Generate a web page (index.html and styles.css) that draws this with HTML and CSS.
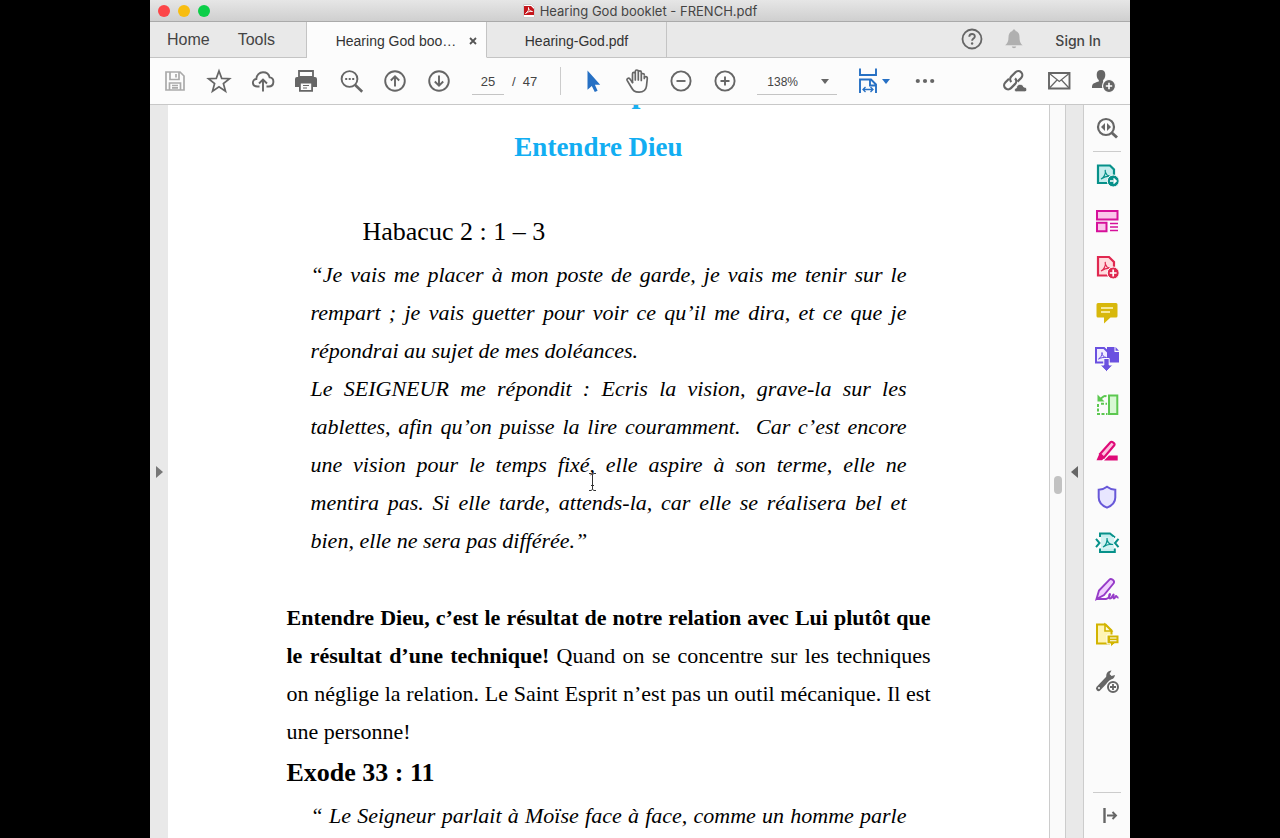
FILE: index.html
```html
<!DOCTYPE html>
<html lang="fr">
<head>
<meta charset="utf-8">
<title>Hearing God booklet - FRENCH.pdf</title>
<link rel="stylesheet" href="styles.css">
</head>
<body>
<div class="window">
  <header class="titlebar">
    <div class="lights">
      <button class="light light-red" aria-label="Close"></button>
      <button class="light light-yellow" aria-label="Minimize"></button>
      <button class="light light-green" aria-label="Zoom"></button>
    </div>
    <div class="window-title">
      <svg class="file-icon" width="12" height="14" viewBox="0 0 12 14"><path d="M.5.5h8l3 3v10H.5z" fill="#fff" stroke="#ccc"/><path d="M1 2h7l3 3v6H1z" fill="#c4161c"/><path d="M2.500 9.500C5 8 6 5.500 5.500 3.500c-.5 2 2 4 4 4-2-.4-5 .2-7 2z" fill="none" stroke="#fff" stroke-width=".9"/></svg>
      <span>Hearing God booklet - FRENCH.pdf</span>
    </div>
  </header>

  <nav class="tabs">
    <div class="views">
      <button class="view">Home</button>
      <button class="view">Tools</button>
    </div>
    <div class="tab tab-active">
      <button class="tab-name">Hearing God boo…</button>
      <button class="tab-close" aria-label="Close tab"><svg width="8" height="8" viewBox="0 0 8 8"><path d="M1 1l6 6M7 1L1 7" stroke="#555" stroke-width="1.800"/></svg></button>
    </div>
    <div class="tab"><button class="tab-name">Hearing-God.pdf</button></div>
    <div class="account">
      <button class="icon-button help" aria-label="Help"><svg class="icon" viewBox="0 0 28 28"><circle cx="14" cy="14" r="9.500" fill="none" stroke="#666" stroke-width="1.800"/><path d="M11.300 11.800c0-3.700 5.500-3.600 5.500-.4 0 2.200-2.700 2.200-2.700 4.400" fill="none" stroke="#666" stroke-width="1.900"/><circle cx="14.100" cy="18.500" r="1.200" fill="#666"/></svg></button>
      <button class="icon-button bell" aria-label="Notifications"><svg class="icon" viewBox="0 0 28 28"><path d="M14 4.500c1 0 1.500.6 1.500 1.400 2.700.8 4 3 4 6 0 4.500 1 6.600 3.300 8.300H5.200C7.500 18.500 8.500 16.400 8.500 12c0-3 1.300-5.300 4-6.100 0-.8.500-1.400 1.500-1.400zM11.800 21.500h4.400c-.3 2.200-4.100 2.200-4.400 0z" fill="#b0b0b0"/></svg></button>
      <button class="sign-in">Sign In</button>
    </div>
  </nav>

  <div class="toolbar">
    <button class="icon-button" aria-label="Save"><svg class="icon" viewBox="0 0 28 28" fill="none" stroke="#aaa" stroke-width="1.700"><path d="M5 5h14l4 4v14H5zM9 5v7.500h9V5M8.500 23v-7h11v7M15 7v3.500M11 18.500h6M11 20.800h6"/></svg></button>
    <button class="icon-button" aria-label="Star"><svg class="icon" viewBox="0 0 28 28"><path d="M14 4l2.700 7.400 7.800.3-6.100 4.900 2.100 7.600L14 19.800l-6.500 4.400 2.100-7.600-6.100-4.900 7.800-.3z" fill="none" stroke="#666" stroke-width="1.700"/></svg></button>
    <button class="icon-button" aria-label="Upload"><svg class="icon" viewBox="0 0 28 28" fill="none" stroke="#666" stroke-width="1.900"><path d="M10.500 19.500H8.200c-5.800 0-5.400-7.300-.9-7.500.1-4 3.200-6.800 6.700-6.800 3.600 0 6 2.300 6.600 5.200 5.300.5 5 9.100-.8 9.100h-2.300M14 24.500V13M10 16.500l4-4 4 4"/></svg></button>
    <button class="icon-button" aria-label="Print"><svg class="icon" viewBox="0 0 28 28"><path d="M6 4h14v6H6z" fill="#fcfcfc" stroke="#666" stroke-width="1.800"/><path d="M4 10h18q2 0 2 2v8h-4v-4H6v4H2v-8q0-2 2-2z" fill="#666"/><path d="M6.900 15.500h12.200v8.300H6.900z" fill="#fcfcfc" stroke="#666" stroke-width="1.800"/><path d="M10 18.500h6M10 21h4" stroke="#666" stroke-width="1.200"/></svg></button>
    <button class="icon-button" aria-label="Find"><svg class="icon" viewBox="0 0 28 28"><circle cx="12.500" cy="12" r="7.900" fill="none" stroke="#666" stroke-width="1.900"/><path d="M18.200 18l7 6.700" stroke="#666" stroke-width="2.600"/><path d="M8.200 12h9" stroke="#666" stroke-width="1.800" stroke-dasharray="2 1.500"/></svg></button>
    <button class="icon-button" aria-label="Previous page"><svg class="icon" viewBox="0 0 28 28" fill="none" stroke="#666" stroke-width="1.900"><circle cx="14" cy="14" r="9.800"/><path d="M14 19.500V9.500M9.800 13.500L14 9.300l4.200 4.200"/></svg></button>
    <button class="icon-button" aria-label="Next page"><svg class="icon" viewBox="0 0 28 28" fill="none" stroke="#666" stroke-width="1.900"><circle cx="14" cy="14" r="9.800"/><path d="M14 8.500v10M9.800 14.500l4.200 4.200 4.200-4.200"/></svg></button>
    <div class="pager">
      <input class="page-input" type="text" value="25" aria-label="Page number">
      <span>/&nbsp; 47</span>
    </div>
    <div class="divider"></div>
    <button class="icon-button" aria-label="Select"><svg class="icon" viewBox="0 0 28 28"><path d="M8.500 3.500v19.300l4.300-3.900 3 6 2.800-1.200-2.700-6h5.300z" fill="#2670c4"/></svg></button>
    <button class="icon-button" aria-label="Hand"><svg class="icon" viewBox="0 0 28 28" fill="none" stroke="#666" stroke-width="1.700" stroke-linejoin="round" stroke-linecap="round"><path d="M9.500 15.500V6.800c0-2 2.800-2 2.800 0v6.200V4.500c0-2 3-2 3 0V13 5.300c0-2 3-2 3 0V13.500 8c0-2 3-2 3 0"/><path d="M24.300 11.500c0-2.500-3-2.500-3 0v-2M24.300 11.500l-.8 7.500c-.5 4-3 6.200-7.400 6.200-4.500 0-6-1.600-8-5.200l-4-6.600c-.8-1.700 1.500-3 2.900-1.400l2.500 3.500"/></svg></button>
    <button class="icon-button" aria-label="Zoom out"><svg class="icon" viewBox="0 0 28 28" fill="none" stroke="#666" stroke-width="1.900"><circle cx="14" cy="14" r="9.600"/><path d="M9.500 14h9"/></svg></button>
    <button class="icon-button" aria-label="Zoom in"><svg class="icon" viewBox="0 0 28 28" fill="none" stroke="#666" stroke-width="1.900"><circle cx="14" cy="14" r="9.600"/><path d="M9.500 14h9M14 9.500v9"/></svg></button>
    <div class="zoom">
      <select class="zoom-select" aria-label="Zoom level"><option>138%</option></select>
      <svg class="zoom-caret" width="8" height="5" viewBox="0 0 8 5"><path d="M0 0h8L4 5z" fill="#666"/></svg>
    </div>
    <button class="icon-button fit" aria-label="Fit width">
      <svg class="icon" viewBox="0 0 28 28" fill="none" stroke="#2670c4" stroke-width="1.900"><path d="M6 1.500V8h16V1.500M6 26V12.500h11l5 5V26M16 13v5.500h6"/><path d="M9 22.500h10M11.500 20L9 22.500l2.500 2.500M16.500 20l2.500 2.500-2.500 2.500" stroke-width="1.300"/></svg>
      <svg width="8" height="5" viewBox="0 0 8 5"><path d="M0 0h8L4 5z" fill="#2670c4"/></svg>
    </button>
    <button class="icon-button more" aria-label="More tools"><svg class="icon" viewBox="0 0 28 28" fill="#666"><circle cx="6.800" cy="14" r="2.100"/><circle cx="14" cy="14" r="2.100"/><circle cx="21.200" cy="14" r="2.100"/></svg></button>
    <div class="share">
      <button class="icon-button" aria-label="Share link"><svg class="icon" viewBox="0 0 28 28"><g transform="rotate(-45 12 13)" fill="none" stroke="#666" stroke-width="2.200"><path d="M10 9.300H4.800a4 4 0 0 0 0 8h6a4 4 0 0 0 3.800-4"/><path d="M14 17.300h5.200a4 4 0 0 0 0-8h-6a4 4 0 0 0-3.800 4"/></g><path d="M15.500 24.800c-2.600 0-2.600-3.700 0-3.900.2-4.300 6.200-4.800 7.200-.9 4 0 4 4.800.6 4.800z" fill="#666" stroke="#fcfcfc" stroke-width=".8"/></svg></button>
      <button class="icon-button" aria-label="Email"><svg class="icon" viewBox="0 0 28 28" fill="none" stroke="#666"><path d="M4 6h20.500v15.500H4z" stroke-width="1.900"/><path d="M4.500 6.500l9.800 8 9.800-8M4.500 21l7.500-8M24 21l-7.500-8" stroke-width="1.200"/></svg></button>
      <button class="icon-button" aria-label="Add people"><svg class="icon" viewBox="0 0 28 28"><path d="M12 3c3 0 4.300 2 4.300 4.700 0 2.500-.9 4.300-2.200 5.300v2c2.500 1 5.400 1.700 5.400 5V21H3c0-4 1-4.700 6.800-6.400V13c-1.300-1-2.100-2.800-2.100-5.300C7.700 5 9 3 12 3z" fill="#666"/><circle cx="20" cy="19" r="6.500" fill="#666" stroke="#fcfcfc" stroke-width="1.200"/><path d="M16.800 19h6.400M20 15.800v6.400" stroke="#fff" stroke-width="1.600"/></svg></button>
    </div>
  </div>

  <div class="workspace">
    <button class="pane-toggle" aria-label="Open navigation pane"><svg width="7" height="12" viewBox="0 0 7 12"><path d="M0 0v12l7-6z" fill="#777"/></svg></button>
    <main class="page">
      <div class="page-text">
        <h1 class="chapter">p</h1>
        <h2 class="title">Entendre Dieu</h2>
        <h3 class="reference">Habacuc 2 : 1 – 3</h3>
        <blockquote class="verse">
          <p>“Je vais me placer à mon poste de garde, je vais me tenir sur le rempart ; je vais guetter pour voir ce qu’il me dira, et ce que je répondrai au sujet de mes doléances.</p>
          <p>Le SEIGNEUR me répondit : Ecris la vision, grave-la sur les tablettes, afin qu’on puisse la lire couramment.&nbsp; Car c’est encore une vision pour le temps fixé, elle aspire à son terme, elle ne mentira pas. Si elle tarde, attends-la, car elle se réalisera bel et bien, elle ne sera pas différée.”</p>
        </blockquote>
        <p class="teaching"><strong>Entendre Dieu, c’est le résultat de notre relation avec Lui plutôt que le résultat d’une technique!</strong> Quand on se concentre sur les techniques on néglige la relation. Le Saint Esprit n’est pas un outil mécanique. Il est une personne!</p>
        <h3 class="subheading">Exode 33 : 11</h3>
        <blockquote class="verse verse-open"><p>“ Le Seigneur parlait à Moïse face à face, comme un homme parle</p></blockquote>
      </div>
      <svg class="cursor" width="9" height="18" viewBox="0 0 9 18"><path d="M1 .5h2l1.500 1 1.500-1h2M1 17.500h2l1.500-1 1.500 1h2M4.500 1.500v15M3 12.500h3" fill="none" stroke="#333"/></svg>
    </main>
    <div class="scrollbar"><div class="thumb"></div></div>
    <button class="pane-toggle pane-right" aria-label="Close tools pane"><svg width="7" height="12" viewBox="0 0 7 12"><path d="M7 0v12L0 6z" fill="#666"/></svg></button>
    <aside class="rail">
      <button class="tool" aria-label="Search tools"><svg class="icon" viewBox="0 0 28 28"><circle cx="13" cy="13" r="8" fill="none" stroke="#666" stroke-width="2.200"/><path d="M18.500 18.500l5.500 5" stroke="#666" stroke-width="3"/><path d="M12 9v8l-4-4zM14 9v8l4-4z" fill="#666"/></svg></button>
      <hr class="rule">
      <button class="tool" aria-label="Export PDF"><svg class="icon" viewBox="0 0 28 28"><path d="M5 4.500h12l4 4V22H5z" fill="#c5eeee" stroke="#07918a" stroke-width="2.200"/><path d="M8 18c3-1 5-6 4.200-9-.5 4 2.800 7 6.800 6.500-3-.8-7-.3-11 2.500z" fill="none" stroke="#07918a" stroke-width="1.200"/><circle cx="20.200" cy="20" r="6" fill="#07918a" stroke="#fcfcfc"/><path d="M17 20h6M20.500 17.500L23 20l-2.500 2.500" fill="none" stroke="#fff" stroke-width="1.600"/></svg></button>
      <button class="tool" aria-label="Organize pages"><svg class="icon" viewBox="0 0 28 28" fill="#fbc4ea" stroke="#d6109a" stroke-width="2"><path d="M4 4h20.500v8.500H4zM4 15.800h9.500v8.500H4z"/><path d="M17 16.500h8M17 20h8M17 23.500h8" stroke-width="1.400"/></svg></button>
      <button class="tool" aria-label="Create PDF"><svg class="icon" viewBox="0 0 28 28"><path d="M5 4h11l5 5v13.500H5z" fill="#ffdcdf" stroke="#e02850" stroke-width="2.200"/><path d="M8 18c3-1 5-6 4.200-9-.5 4 2.800 7 6.800 6.500-3-.8-7-.3-11 2.500z" fill="none" stroke="#e02850" stroke-width="1.200"/><circle cx="20.200" cy="20" r="6" fill="#e02850" stroke="#fcfcfc"/><path d="M16.800 20h6.800M20.200 16.600v6.800" stroke="#fff" stroke-width="1.700"/></svg></button>
      <button class="tool" aria-label="Comment"><svg class="icon" viewBox="0 0 28 28"><path d="M5 4h18q1.500 0 1.500 1.500V17q0 1.500-1.500 1.500h-5.500L11 24.500v-6H5q-1.500 0-1.500-1.500V5.500Q3.500 4 5 4z" fill="#d8b80c"/><path d="M8 9h12M8 13h9" stroke="#fff8c8" stroke-width="1.600"/></svg></button>
      <button class="tool" aria-label="Combine files"><svg class="icon" viewBox="0 0 28 28"><path d="M14 2h7.500v5H26v10.500H14z" fill="#6a50e0"/><path d="M22.500 2l3.500 3.800h-3.500z" fill="#6a50e0"/><path d="M3 3h8l4 4v10.500H3z" fill="#f0edff" stroke="#6a50e0" stroke-width="2"/><path d="M5.500 14c2-1 3.800-4 3.500-6.500 0 3 2 5 4.500 5-2-.5-5 0-8 1.500z" fill="none" stroke="#6a50e0"/><path d="M10.800 13.500h5.400V20h3.600l-6.300 6.500L7.200 20h3.600z" fill="#6a50e0" stroke="#fcfcfc"/></svg></button>
      <button class="tool" aria-label="Compress pages"><svg class="icon" viewBox="0 0 28 28" stroke="#5cc850"><path d="M16 4.500h8.300V23H16z" fill="#d8f8d4" stroke-width="2"/><path d="M5 13v10h9.500M8 12.800h6" fill="none" stroke-width="2" stroke-dasharray="3 1.500"/><path d="M6 9l4.500-3.500q1.500-1 3 0" fill="none" stroke-width="2"/><path d="M4.500 3.500v7h7z" fill="#5cc850" stroke="none"/></svg></button>
      <button class="tool" aria-label="Redact"><svg class="icon" viewBox="0 0 28 28"><path d="M7 17L17.500 5.300c1.300-1.500 5 1.300 3.800 3L11 20.500z" fill="#ffc0df" stroke="#df0a78" stroke-width="2.100"/><path d="M6.500 16.500l5 4.500L9 23.300H3.500zM16 18.500h8.700v5H11z" fill="#df0a78"/></svg></button>
      <button class="tool" aria-label="Protect"><svg class="icon" viewBox="0 0 28 28"><path d="M14 3.800c2.500 2 5 2.800 8.300 2.900v7.800c0 4.800-4 8.400-8.300 10.200-4.300-1.800-8.300-5.400-8.300-10.200V6.700c3.300-.1 5.800-.9 8.300-2.900z" fill="#e8e6ff" stroke="#6858d8" stroke-width="2"/></svg></button>
      <button class="tool" aria-label="Optimize PDF"><svg class="icon" viewBox="0 0 28 28" fill="none" stroke="#07918a" stroke-width="2"><path d="M7 8V4.500h10l5 4M7 19.500V23h14.800v-3.500" fill="#c5eeee"/><path d="M8 8h13v12H8z" fill="#d2f2f2" stroke="none"/><path d="M3 9.800L6.500 14 3 18.200M25.500 9.800L22 14l3.500 4.200"/><path d="M10 18c3-1 4.500-6 4-9-.3 4 2.300 6.500 6 6.500-3-.6-6.500 0-10 2.500z" stroke-width="1.200"/></svg></button>
      <button class="tool" aria-label="Fill and sign"><svg class="icon" viewBox="0 0 28 28" fill="none" stroke="#963bc8" stroke-width="1.900"><path d="M3.500 24l2.500-8.500L16.500 4.600c1.600-1.700 5.500 1.100 4.300 3.500L11 20z" fill="#f0cfff"/><path d="M3.500 24H13c3-.5 4.500-4.500 4-5s-2 4.500 0 4.500 3-4 3.500-4-1 4 .5 4 1-2.500 2-2.500.5 2 2.500 1.500"/></svg></button>
      <button class="tool" aria-label="Send for comments"><svg class="icon" viewBox="0 0 28 28"><path d="M4 3.500h8.500l6 6v13H4z" fill="#fff4b5" stroke="#d2b400" stroke-width="2"/><path d="M12 3.500V10h6.500z" fill="#fffbe0" stroke="#d2b400" stroke-width="1.600"/><path d="M14 14h12v8.800h-4.500L17.500 26v-3.200H14z" fill="#d2b400" stroke="#fcfcfc"/><path d="M17 17h6.500M17 19.800h6.500" stroke="#fff" stroke-width="1.100"/></svg></button>
      <button class="tool" aria-label="More tools"><svg class="icon" viewBox="0 0 28 28"><path d="M5.500 21.500L16 10.500" stroke="#666" stroke-width="5" stroke-linecap="round"/><path d="M18.500 3.500c-4 .3-6.500 4-4.500 7.800 3 2.500 7.300 1.200 8-3.300l-3.500 1-2-2z" fill="#666"/><circle cx="6" cy="21" r="1" fill="#fff"/><circle cx="20" cy="20" r="5.700" fill="#fff" stroke="#fcfcfc" stroke-width="3"/><circle cx="20" cy="20" r="5" fill="#fff" stroke="#666" stroke-width="2"/><path d="M17 20h6M20 17v6" stroke="#666" stroke-width="1.800"/></svg></button>
      <div class="rail-bottom">
        <hr class="rule">
        <button class="tool tool-last" aria-label="Collapse pane"><svg class="icon" viewBox="0 0 28 28" fill="none" stroke="#666"><path d="M11.500 6v15" stroke-width="2.400"/><path d="M14 13.500h9M19.500 10l3.500 3.500-3.500 3.500" stroke-width="1.900"/></svg></button>
      </div>
    </aside>
  </div>
</div>
</body>
</html>
```
FILE: styles.css
```css
* { box-sizing: border-box; }

body {
  margin: 0;
  padding: 0 150px;
  background: #000;
  font-family: "Liberation Sans", Arial, sans-serif;
  color: #444;
}

button {
  margin: 0;
  padding: 0;
  border: 0;
  background: none;
  color: inherit;
  font: inherit;
}

h1, h2, h3, p, blockquote { margin: 0; }

.window {
  display: flex;
  flex-direction: column;
  height: 100vh;
  overflow: hidden;
  background: #fcfcfc;
}

.titlebar {
  display: grid;
  grid-template-columns: 1fr auto 1fr;
  align-items: center;
  flex: none;
  height: 22px;
  padding: 0 8px;
  border-bottom: 1px solid #aaa;
  background: linear-gradient(#e6e6e6, #cfcfcf);
}

.lights { display: flex; gap: 8px; }
.light { width: 12px; height: 12px; border-radius: 50%; }
.light-red { background: #fc4548; }
.light-yellow { background: #f8bd10; }
.light-green { background: #0bce48; }

.window-title {
  display: flex;
  align-items: center;
  gap: 5px;
  font-family: Inter, "Liberation Sans", sans-serif;
  font-size: 13px;
}

.file-icon { display: block; }

.tabs {
  display: flex;
  flex: none;
  height: 36px;
  background: #e9e9e9;
}

.views {
  display: flex;
  gap: 28px;
  width: 157px;
  padding-left: 17px;
  border-right: 1px solid #c4c4c4;
  border-bottom: 1px solid #c4c4c4;
  font-size: 16px;
}

.tab {
  display: flex;
  align-items: center;
  justify-content: center;
  width: 180px;
  padding-top: 2px;
  border-right: 1px solid #c4c4c4;
  border-bottom: 1px solid #c4c4c4;
  font-size: 14px;
  color: #333;
}

.tab-active {
  gap: 13px;
  padding-left: 20px;
  border-bottom-color: #fcfcfc;
  background: #fcfcfc;
}

.tab-close { display: flex; }

.account {
  display: flex;
  flex: 1;
  align-items: center;
  justify-content: flex-end;
  padding-right: 29px;
  border-bottom: 1px solid #c4c4c4;
}

.sign-in {
  margin-left: 20px;
  padding-top: 2px;
  font-family: Inter, "Liberation Sans", sans-serif;
  font-size: 14px;
  font-weight: 500;
}

.icon { display: block; flex: none; width: 28px; height: 28px; }

.icon-button {
  display: flex;
  flex: none;
  align-items: center;
  justify-content: center;
  width: 44px;
  height: 44px;
}

.account .icon-button { width: 42px; height: 34px; margin-bottom: 2px; }

.toolbar {
  display: flex;
  align-items: center;
  flex: none;
  height: 47px;
  padding: 0 5px 0 3px;
  border-bottom: 1px solid #c8c8c8;
}

.pager {
  display: flex;
  align-items: center;
  gap: 8px;
  margin-left: 11px;
  font-size: 13px;
}

.page-input {
  width: 32px;
  height: 28px;
  padding: 2px 0 0;
  border: 0;
  border-bottom: 1px solid #c4c4c4;
  background: none;
  color: #444;
  font: inherit;
  text-align: center;
}

.pager span { padding-top: 1px; }

.divider {
  width: 1px;
  height: 28px;
  margin: 0 10px 0 23px;
  background: #ccc;
}

.zoom { position: relative; margin-left: 10px; }

.zoom-select {
  width: 80px;
  height: 28px;
  padding: 2px 0 0 10px;
  border: 0;
  border-bottom: 1px solid #c4c4c4;
  border-radius: 0;
  appearance: none;
  background: none;
  color: #444;
  font: inherit;
  font-size: 12px;
}

.zoom-caret {
  position: absolute;
  top: 12px;
  right: 8px;
  pointer-events: none;
}

.fit { width: 36px; margin-left: 17px; }
.more { margin-left: 13px; }
.share { display: flex; margin-left: auto; }

.workspace { display: flex; flex: 1; min-height: 0; }

.pane-toggle {
  display: flex;
  flex: none;
  align-items: center;
  justify-content: center;
  width: 18px;
  background: #e9e9e9;
}

.pane-right { border-right: 1px solid #ccc; }

.page {
  position: relative;
  flex: 1;
  min-width: 0;
  overflow: hidden;
  background: #fff;
  color: #000;
  font-family: "Liberation Serif", "Times New Roman", serif;
}

.page-text {
  width: 644px;
  max-width: 100%;
  margin: -33px auto 0;
  font-size: 22px;
  line-height: 38px;
}

.chapter {
  margin-bottom: 18px;
  padding-left: 345px;
  color: #1ab0f0;
  font-size: 32px;
  line-height: 38px;
}

.title {
  margin-bottom: 47px;
  padding-right: 20px;
  color: #12aef2;
  font-size: 27px;
  line-height: 38px;
  text-align: center;
}

.reference {
  margin-bottom: 5px;
  padding-left: 76px;
  font-size: 26px;
  font-weight: 400;
}

.verse {
  padding: 0 24px;
  font-style: italic;
  text-align: justify;
}

.teaching { margin-top: 39px; text-align: justify; }

.subheading {
  margin: 1px 0 3px;
  font-size: 26px;
  line-height: 42px;
}

.verse-open { text-align-last: justify; }

.cursor { position: absolute; top: 368px; left: 420px; }

.scrollbar {
  flex: none;
  width: 17px;
  padding-top: 371px;
  border-right: 1px solid #ccc;
  border-left: 1px solid #ccc;
  background: #fafafa;
}

.thumb {
  width: 8px;
  height: 18px;
  margin: 0 auto;
  border-radius: 4px;
  background: #c2c2c2;
}

.rail {
  display: flex;
  flex: none;
  flex-direction: column;
  width: 46px;
  background: #fbfbfb;
}

.tool {
  display: flex;
  flex: none;
  align-items: center;
  justify-content: center;
  width: 46px;
  height: 46px;
}

.tool-last { height: 45px; }

.rule {
  width: 28px;
  height: 1px;
  margin: 0 auto;
  border: 0;
  background: #ccc;
}

.rail-bottom { margin-top: auto; }
```
